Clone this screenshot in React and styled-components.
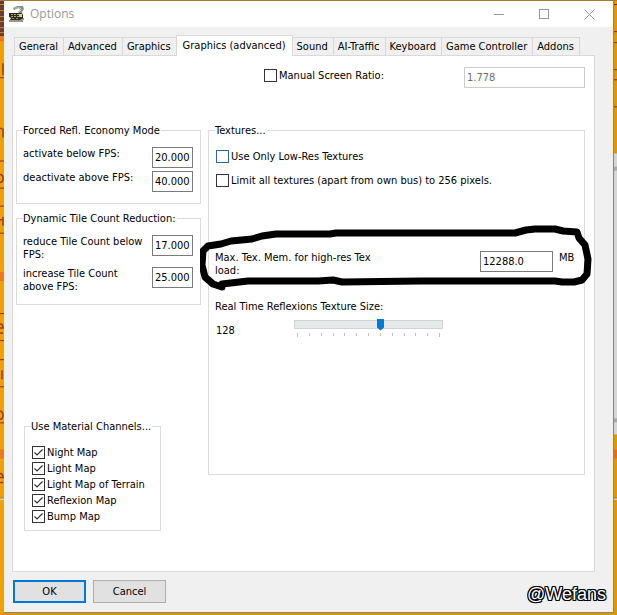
import { useState } from "react";
import styled, { createGlobalStyle, css } from "styled-components";

const GlobalStyle = createGlobalStyle`
  * {
    box-sizing: border-box;
  }

  body {
    margin: 0;
    background: #f0a000;
    color: #000;
    font: 11px/13px "DejaVu Sans Condensed", "Noto Sans", sans-serif;
  }

  button,
  input {
    font: inherit;
    color: inherit;
    margin: 0;
  }
`;

const Desktop = styled.div`
  display: grid;
  grid-template-columns: 4px minmax(0, 1fr) 3px;
  padding: 1px 0 4px;
  background: linear-gradient(#a87a2c, #a87a2c) top / 100% 1px no-repeat,
    linear-gradient(#dc9400, #dc9400) bottom / 100% 4px no-repeat;
`;

const Gutter = styled.svg`
  display: block;
  width: 100%;
  height: 100%;
`;

const Window = styled.main`
  min-width: 0;
  background: #f0f0f0;
  border-right: 1px solid #8c8670;
  border-bottom: 1px solid #8c8670;
`;

const TitleBar = styled.header`
  display: flex;
  align-items: center;
  height: 26px;
  padding: 0 1px 0 5px;
  background: #fff;
  color: #999;
`;

const AppIcon = styled.svg`
  width: 16px;
  height: 16px;
`;

const Title = styled.h1`
  flex: 1;
  margin: 0 0 0 5px;
  font: 12px/16px "Open Sans", sans-serif;
`;

const WindowButton = styled.button`
  width: 45px;
  height: 26px;
  padding: 0;
  border: 0;
  background: none;

  svg {
    display: block;
    margin: auto;
  }
`;

const Client = styled.div`
  padding: 8px 18px 9px 8px;
`;

const TabList = styled.div`
  display: flex;
  align-items: flex-end;
  height: 20px;
  padding-left: 2px;
`;

const Tab = styled.button`
  height: 18px;
  padding: 0 5px 0 4px;
  border: 1px solid #d9d9d9;
  border-width: 1px 1px 0 0;
  background: #f0f0f0;
  white-space: nowrap;

  &:first-child {
    border-left-width: 1px;
  }

  ${({ $active }) =>
    $active &&
    css`
      height: 21px;
      margin: 0 0 -1px -1px;
      padding: 0 6px 2px;
      border-left-width: 1px;
      background: #fff;
      position: relative;
    `}
`;

const Page = styled.section`
  padding: 11px 9px 40px 3px;
  border: 1px solid #d9d9d9;
  background: #fff;
`;

const RatioRow = styled.div`
  display: flex;
  justify-content: space-between;
  padding-left: 247px;
  margin-bottom: 36px;
`;

const Columns = styled.div`
  display: grid;
  grid-template-columns: 185px minmax(0, 1fr);
  align-items: start;
  gap: 7px;
`;

const Column = styled.div`
  display: flex;
  flex-direction: column;
  gap: 8px;
`;

const Group = styled.fieldset`
  min-width: 0;
  margin: 0;
  padding: 10px 7px 11px 6px;
  border: 1px solid #dcdcdc;
`;

const MaterialGroup = styled(Group)`
  width: 137px;
  margin: 107px 0 0 8px;
  padding-bottom: 6px;
`;

const Legend = styled.legend`
  padding: 0 1px 0 0;
  line-height: 13px;
  white-space: nowrap;
`;

const Fields = styled.div`
  display: grid;
  gap: ${({ $gap }) => $gap}px;
`;

const FieldRow = styled.div`
  display: flex;
  justify-content: space-between;
  align-items: flex-start;

  label {
    max-width: 120px;
  }
`;

const TextBox = styled.input`
  width: ${({ $width }) => $width || 41}px;
  height: 21px;
  padding: 0 2px;
  border: 1px solid #7a7a7a;
  border-radius: 0;
  background: #fff;

  &:disabled {
    border-color: #ccc;
    color: #6d6d6d;
  }
`;

const CheckLabel = styled.label`
  display: flex;
  align-items: center;
  gap: 2px;
  height: 16px;
  margin-left: 1px;
`;

const CheckBox = styled.input`
  appearance: none;
  width: 13px;
  height: 13px;
  border: 1px solid ${({ $hot }) => ($hot ? "#2a6a9e" : "#333")};
  background: #fff;

  &:checked {
    background: #fff
      url("data:image/svg+xml,%3Csvg xmlns='http://www.w3.org/2000/svg' viewBox='0 0 11 11'%3E%3Cpath d='M1.5 5.5 4 8 9.5 2.5' fill='none' stroke='%23333' stroke-width='1.2'/%3E%3C/svg%3E");
  }
`;

const CheckList = styled.div`
  display: grid;
  gap: ${({ $gap }) => $gap || 0}px;
  padding-top: 1px;
`;

const MemoryRow = styled.div`
  position: relative;
  display: grid;
  grid-template-columns: 170px 1fr 73px 18px;
  column-gap: 6px;
  align-items: start;
  min-height: 26px;
  margin: 63px 0 23px;

  input {
    grid-column: 3;
  }
`;

const Marker = styled.svg`
  position: absolute;
  left: -15px;
  top: -26px;
  width: 392px;
  height: 68px;
  pointer-events: none;
`;

const SliderRow = styled.div`
  display: grid;
  grid-template-columns: 77px 151px;
  gap: 1px;
  margin: 4px 0 125px;

  output {
    padding: 7px 0 0 1px;
  }
`;

const Slider = styled.input`
  appearance: none;
  display: block;
  width: 151px;
  height: 15px;
  background: linear-gradient(#e7eaea, #e7eaea) 2px 4px / 147px 7px no-repeat,
    linear-gradient(#d0d3d3, #d0d3d3) 1px 3px / 149px 9px no-repeat;

  &::-webkit-slider-thumb {
    appearance: none;
    width: 7px;
    height: 12px;
    background: #0078d7;
    clip-path: polygon(0 0, 100% 0, 100% 75%, 50% 100%, 0 75%);
  }
`;

const Ticks = styled.svg`
  display: block;
  width: 151px;
  height: 6px;
`;

const Footer = styled.footer`
  display: flex;
  align-items: flex-start;
  gap: 7px;
  padding: 8px 0 0 1px;
`;

const DialogButton = styled.button`
  width: 73px;
  height: 23px;
  padding: 0;
  border: ${({ $primary }) => ($primary ? "2px solid #0078d7" : "1px solid #adadad")};
  background: #e1e1e1;
`;

const Watermark = styled.span`
  margin: 4px -11px -1px auto;
  color: #fff;
  font: 18px/20px "Liberation Sans", sans-serif;
  text-shadow: 1px 0 #000, -1px 0 #000, 0 1px #000, 0 -1px #000, 1px 1px #000,
    -1px -1px #000, 1px -1px #000, -1px 1px #000;
`;

const tabs = [
  "General",
  "Advanced",
  "Graphics",
  "Graphics (advanced)",
  "Sound",
  "AI-Traffic",
  "Keyboard",
  "Game Controller",
  "Addons",
];

const channels = [
  "Night Map",
  "Light Map",
  "Light Map of Terrain",
  "Reflexion Map",
  "Bump Map",
];

const leftLines = [76, 159, 186, 204, 231, 311, 338, 357, 384, 420];
const rightLines = [3, 30, 41, 68, 78, 105];

const Field = ({ id, label, value }) => (
  <FieldRow>
    <label htmlFor={id}>{label}</label>
    <TextBox id={id} defaultValue={value} />
  </FieldRow>
);

const Check = ({ label, ...props }) => (
  <CheckLabel>
    <CheckBox type="checkbox" {...props} />
    {label}
  </CheckLabel>
);

const LeftEdge = () => (
  <Gutter viewBox="0 0 4 610" preserveAspectRatio="none" aria-hidden="true">
    <rect width="4" height="610" fill="#f0a000" />
    <rect width="4" height="35" fill="#6a3c30" />
    {[3, 9, 15, 20, 26, 31].map((y) => (
      <rect key={y} y={y} width="4" height="1" fill="#c88428" />
    ))}
    <rect y="35" width="4" height="5" fill="#f07818" />
    <rect y="270" width="4" height="9" fill="#f07818" />
    <rect y="447" width="4" height="9" fill="#f07818" />
    {leftLines.map((y) => (
      <rect key={y} y={y} width="4" height="1" fill="#982c08" />
    ))}
    <g fill="none" stroke="#a03808" strokeWidth="1.5">
      <path d="M3 62v12M0 127h2M3 127v9M0 173q3 0 3 4t-3 4M0 218h2M3 215v9" />
      <path d="M0 322q3 0 3 4H0M0 331h3M2 368v9M0 409q3 0 3 4t-3 4M0 471q3 0 3 4H0M0 480h3" />
    </g>
    <rect y="495" width="4" height="1" fill="#7a7060" />
    <rect y="496" width="4" height="1" fill="#eee" />
  </Gutter>
);

const RightEdge = () => (
  <Gutter viewBox="0 0 4 610" preserveAspectRatio="none" aria-hidden="true">
    <rect width="4" height="610" fill="#e09800" />
    {rightLines.map((y) => (
      <rect key={y} y={y} width="4" height="1" fill="#902c08" />
    ))}
    <rect y="152" width="4" height="280" fill="#d6d6d6" />
    <rect y="165" width="4" height="4" fill="#aaa" />
    <rect y="416" width="4" height="4" fill="#aaa" />
    <rect y="447" width="4" height="9" fill="#e07014" />
    <rect y="495" width="4" height="1" fill="#7a7060" />
    <rect y="496" width="4" height="1" fill="#eee" />
  </Gutter>
);

const App = () => {
  const [active, setActive] = useState("Graphics (advanced)");

  return (
    <>
      <GlobalStyle />
      <Desktop>
        <LeftEdge />
        <Window>
          <TitleBar>
            <AppIcon viewBox="0 0 16 16" aria-hidden="true">
              <path d="M4 2 8 0h6l1 3-2 3 1 3-4 1-1-4 2-2-1-2-5 2z" fill="#8b8d8b" />
              <path d="M6 2h5l1 2-3 3" fill="none" stroke="#c8cac8" />
              <path d="M0 7h12l2 2v3l-3 2H1l1-2-2-1z" fill="#2c2a22" />
              <path d="M2 8.5h8M2 10.5h9" stroke="#b59d55" strokeDasharray="2 1" />
              <path d="M10 8h3v3h-3z" fill="#dcca83" />
              <path d="M3 12.5h8" stroke="#8a8878" strokeDasharray="2 2" />
              <path d="M0 15h14M11 13h4" stroke="#303028" />
            </AppIcon>
            <Title>Options</Title>
            <WindowButton aria-label="Minimize">
              <svg width="11" height="11">
                <path d="M0 5.5h10" stroke="#999" />
              </svg>
            </WindowButton>
            <WindowButton aria-label="Maximize">
              <svg width="11" height="11">
                <rect x=".5" y=".5" width="9" height="9" fill="none" stroke="#999" />
              </svg>
            </WindowButton>
            <WindowButton aria-label="Close">
              <svg width="11" height="11">
                <path d="m.5.5 10 10m0-10-10 10" stroke="#999" />
              </svg>
            </WindowButton>
          </TitleBar>

          <Client>
            <TabList role="tablist">
              {tabs.map((tab) => (
                <Tab
                  key={tab}
                  role="tab"
                  aria-selected={tab === active}
                  $active={tab === active}
                  onClick={() => setActive(tab)}
                >
                  {tab}
                </Tab>
              ))}
            </TabList>

            <Page>
              <RatioRow>
                <Check label="Manual Screen Ratio:" />
                <TextBox
                  $width={121}
                  defaultValue="1.778"
                  aria-label="Screen ratio"
                  disabled
                />
              </RatioRow>

              <Columns>
                <Column>
                  <Group>
                    <Legend>Forced Refl. Economy Mode</Legend>
                    <Fields $gap={3}>
                      <Field id="below" label="activate below FPS:" value="20.000" />
                      <Field id="above" label="deactivate above FPS:" value="40.000" />
                    </Fields>
                  </Group>
                  <Group>
                    <Legend>Dynamic Tile Count Reduction:</Legend>
                    <Fields $gap={6}>
                      <Field
                        id="reduce"
                        label="reduce Tile Count below FPS:"
                        value="17.000"
                      />
                      <Field
                        id="increase"
                        label="increase Tile Count above FPS:"
                        value="25.000"
                      />
                    </Fields>
                  </Group>
                  <MaterialGroup>
                    <Legend>Use Material Channels...</Legend>
                    <CheckList>
                      {channels.map((channel) => (
                        <Check key={channel} label={channel} defaultChecked />
                      ))}
                    </CheckList>
                  </MaterialGroup>
                </Column>

                <Group>
                  <Legend>Textures...</Legend>
                  <CheckList $gap={8}>
                    <Check label="Use Only Low-Res Textures" $hot />
                    <Check label="Limit all textures (apart from own bus) to 256 pixels." />
                  </CheckList>
                  <MemoryRow>
                    <label htmlFor="memory">Max. Tex. Mem. for high-res Tex load:</label>
                    <TextBox id="memory" $width={73} defaultValue="12288.0" />
                    <span>MB</span>
                    <Marker viewBox="200 225 392 68" aria-hidden="true">
                      <path
                        d="M222 287 213 284 205 277 202 265 203 251 208 246 221 244 231 241 252 239 262 236 276 234 330 234 336 233 515 233 526 230 535 229 555 229 563 231 577 232 579 238 585 245 588 259 587 274 582 280 574 282 562 282 555 281 421 281 342 282 333 280 318 281 248 281 222 284z"
                        fill="none"
                        stroke="#000"
                        strokeWidth="7"
                        strokeLinejoin="round"
                      />
                    </Marker>
                  </MemoryRow>
                  <label htmlFor="reflexions">Real Time Reflexions Texture Size:</label>
                  <SliderRow>
                    <output htmlFor="reflexions">128</output>
                    <div>
                      <Slider
                        id="reflexions"
                        type="range"
                        min="0"
                        max="12"
                        defaultValue="7"
                      />
                      <Ticks aria-hidden="true">
                        {Array.from({ length: 13 }, (_, i) => (
                          <rect
                            key={i}
                            x={4 + Math.round((i * 142) / 12)}
                            y="1"
                            width="1"
                            height={i % 12 ? 3 : 4}
                            fill="#c4c4c4"
                          />
                        ))}
                      </Ticks>
                    </div>
                  </SliderRow>
                </Group>
              </Columns>
            </Page>

            <Footer>
              <DialogButton $primary>OK</DialogButton>
              <DialogButton>Cancel</DialogButton>
              <Watermark>@Wefans</Watermark>
            </Footer>
          </Client>
        </Window>
        <RightEdge />
      </Desktop>
    </>
  );
};

export default App;
